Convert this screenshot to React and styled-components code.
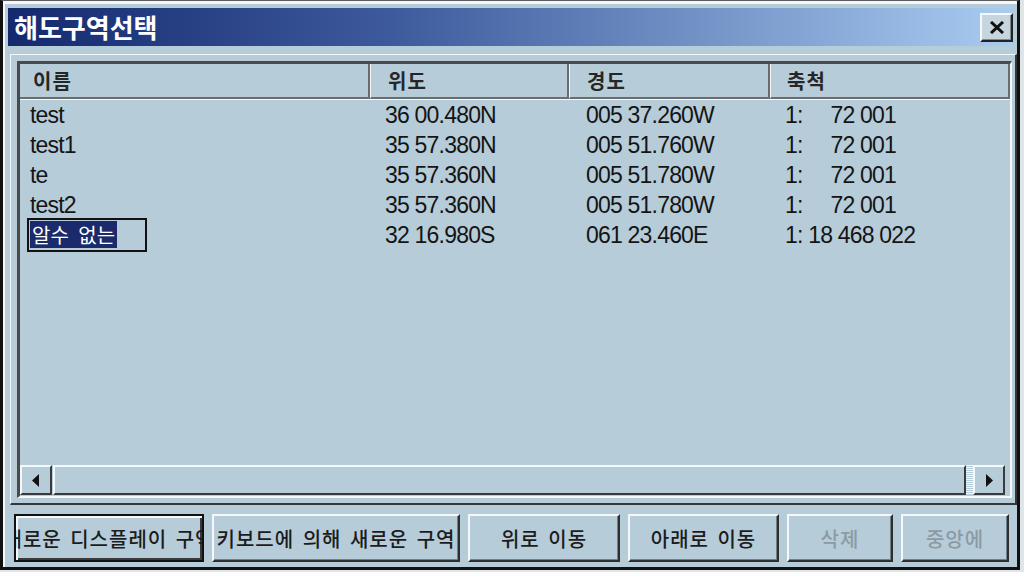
import React from "react";
import styled, { createGlobalStyle, css } from "styled-components";

const BG = "#b6ccd8";
const HI = "#f4f8fa";

const GlobalStyle = createGlobalStyle`
  html, body { margin: 0; padding: 0; background: #dfe6ea; }
  body { font-family: "Liberation Sans", "Noto Sans CJK KR", sans-serif; }
  * { box-sizing: border-box; }
`;

const Window = styled.div`
  width: 1020px;
  height: 570px;
  background: ${BG};
  border-top: 1px solid #5a5a5a;
  border-left: 3px solid #111;
  border-right: 3px solid #111;
  border-bottom: 3px solid #111;
  box-shadow: inset 2px 3px 0 ${HI};
  padding: 7px 0 5px 5px;
  display: flex;
  flex-direction: column;
`;

const TitleBar = styled.div`
  height: 38px;
  margin-right: 3px;
  flex: none;
  background: linear-gradient(to right, #14296e 0%, #3d5a9c 38%, #a9ccf1 100%);
  display: flex;
  align-items: center;
  justify-content: space-between;
  padding: 0 1px 0 6px;
`;

const TitleText = styled.span`
  color: #fff;
  font-family: "Noto Sans CJK KR", sans-serif;
  font-weight: 700;
  font-size: 26px;
  line-height: 1;
`;

const CloseButton = styled.div`
  width: 33px;
  height: 29px;
  margin-top: 1px;
  background: #c6d5de;
  border: 2px solid;
  border-color: ${HI} #222 #222 ${HI};
  box-shadow: inset -1px -1px 0 #7b8b94;
  display: flex;
  align-items: center;
  justify-content: center;
`;

const ListOuter = styled.div`
  flex: 1;
  min-height: 0;
  margin: 8px 0 0 2px;
  border-style: solid;
  border-width: 1px 2px 2px 1px;
  border-color: ${HI} #363636 #363636 ${HI};
  padding: 6px 3px 5px 6px;
  display: flex;
`;

const ListView = styled.div`
  flex: 1;
  display: flex;
  flex-direction: column;
  border-style: solid;
  border-width: 3px 2px 2px 3px;
  border-color: #4a4a4a ${HI} ${HI} #4a4a4a;
`;

const cols = "350px 199px 201px 1fr";

const Header = styled.div`
  display: grid;
  grid-template-columns: ${cols};
  height: 35px;
  flex: none;
`;

const HeaderCell = styled.div`
  height: 35px;
  border-right: 2px solid #6c6c6c;
  border-bottom: 2px solid #6c6c6c;
  border-left: ${(p) => (p.$first ? "none" : `1px solid ${HI}`)};
  padding-left: ${(p) => p.$pad}px;
  display: flex;
  align-items: center;
  font-family: "Noto Sans CJK KR", sans-serif;
  font-size: 20px;
  font-weight: 700;
  letter-spacing: 1px;
  color: #262626;
`;

const RowsArea = styled.div`
  flex: 1;
  border-top: 1px solid ${HI};
`;

const Row = styled.div`
  display: grid;
  grid-template-columns: ${cols};
  grid-template-rows: 30px;
  height: 30px;
  align-items: center;
  font-size: 23px;
  letter-spacing: -0.8px;
  color: #141414;
`;

const Cell = styled.div`
  padding-left: ${(p) => p.$pad}px;
  white-space: pre;
  line-height: 30px;
`;

const EditBox = styled.div`
  margin-left: 7px;
  width: 120px;
  height: 34px;
  border: 2px solid #111;
  padding: 1px 0 0 1px;
  display: flex;
  align-items: flex-start;
`;

const Selected = styled.span`
  background: #1b2a6b;
  color: #fff;
  font-family: "Noto Sans CJK KR", sans-serif;
  font-size: 20px;
  letter-spacing: 0;
  word-spacing: 5px;
  height: 27px;
  line-height: 27px;
  padding: 0 2px;
  white-space: pre;
`;

const Scrollbar = styled.div`
  height: 33px;
  flex: none;
  display: flex;
  padding: 2px 5px 1px 0;
`;

const raised = css`
  border: 2px solid;
  border-color: ${HI} #3a3a3a #3a3a3a ${HI};
`;

const ScrollButton = styled.div`
  width: 32px;
  ${raised};
  display: flex;
  align-items: center;
  justify-content: center;
`;

const Thumb = styled.div`
  flex: 1;
  margin-left: 1px;
  ${raised};
`;

const Track = styled.div`
  width: 7px;
  background: repeating-linear-gradient(
    to bottom,
    ${HI} 0px,
    ${HI} 1px,
    ${BG} 1px,
    ${BG} 2px
  );
`;

const ButtonRow = styled.div`
  display: flex;
  gap: 8px;
  margin-top: 9px;
  padding-left: 6px;
  height: 48px;
  flex: none;
`;

const Button = styled.div`
  width: ${(p) => p.$w}px;
  height: 48px;
  background: ${BG};
  overflow: hidden;
  display: flex;
  align-items: center;
  justify-content: center;
  font-family: "Noto Sans CJK KR", sans-serif;
  font-size: 20px;
  font-weight: 500;
  letter-spacing: 1px;
  word-spacing: 3px;
  white-space: nowrap;
  color: ${(p) => (p.$disabled ? "#8b9aa4" : "#1c1c1c")};
  ${(p) =>
    p.$focused
      ? css`
          border: 2px solid #111;
          box-shadow: inset 2px 2px 0 ${HI}, inset -2px -2px 0 #3a3a3a;
        `
      : css`
          border: 2px solid;
          border-color: ${HI} #2e2e2e #2e2e2e ${HI};
          box-shadow: inset -1px -1px 0 #6f8089;
        `}
`;

const Label = styled.span`
  flex: none;
`;

const rows = [
  ["test", "36 00.480N", "005 37.260W", "1:     72 001"],
  ["test1", "35 57.380N", "005 51.760W", "1:     72 001"],
  ["te", "35 57.360N", "005 51.780W", "1:     72 001"],
  ["test2", "35 57.360N", "005 51.780W", "1:     72 001"],
  ["알수 없는", "32 16.980S", "061 23.460E", "1: 18 468 022", true],
];

const buttons = [
  { t: "새로운 디스플레이 구역", w: 190, focused: true },
  { t: "키보드에 의해 새로운 구역", w: 248 },
  { t: "위로 이동", w: 152 },
  { t: "아래로 이동", w: 151 },
  { t: "삭제", w: 106, disabled: true },
  { t: "중앙에", w: 108, disabled: true },
];

export default function App() {
  return (
    <>
      <GlobalStyle />
      <Window>
        <TitleBar>
          <TitleText>해도구역선택</TitleText>
          <CloseButton>
            <svg width="16" height="13" viewBox="0 0 16 13">
              <path d="M2 1 L14 12 M14 1 L2 12" stroke="#111" strokeWidth="3" fill="none" />
            </svg>
          </CloseButton>
        </TitleBar>
        <ListOuter>
          <ListView>
            <Header>
              <HeaderCell $first $pad={13}>이름</HeaderCell>
              <HeaderCell $pad={17}>위도</HeaderCell>
              <HeaderCell $pad={17}>경도</HeaderCell>
              <HeaderCell $pad={16}>축척</HeaderCell>
            </Header>
            <RowsArea>
              {rows.map((r, i) => (
                <Row key={i}>
                  {r[4] ? (
                    <EditBox>
                      <Selected>{r[0]}</Selected>
                    </EditBox>
                  ) : (
                    <Cell $pad={10}>{r[0]}</Cell>
                  )}
                  <Cell $pad={15}>{r[1]}</Cell>
                  <Cell $pad={17}>{r[2]}</Cell>
                  <Cell $pad={15}>{r[3]}</Cell>
                </Row>
              ))}
            </RowsArea>
            <Scrollbar>
              <ScrollButton>
                <svg width="8" height="13" viewBox="0 0 8 13">
                  <path d="M7 0 L0 6.5 L7 13 Z" fill="#111" />
                </svg>
              </ScrollButton>
              <Thumb />
              <Track />
              <ScrollButton>
                <svg width="8" height="13" viewBox="0 0 8 13">
                  <path d="M1 0 L8 6.5 L1 13 Z" fill="#111" />
                </svg>
              </ScrollButton>
            </Scrollbar>
          </ListView>
        </ListOuter>
        <ButtonRow>
          {buttons.map((b) => (
            <Button key={b.t} $w={b.w} $focused={b.focused} $disabled={b.disabled}>
              <Label>{b.t}</Label>
            </Button>
          ))}
        </ButtonRow>
      </Window>
    </>
  );
}
